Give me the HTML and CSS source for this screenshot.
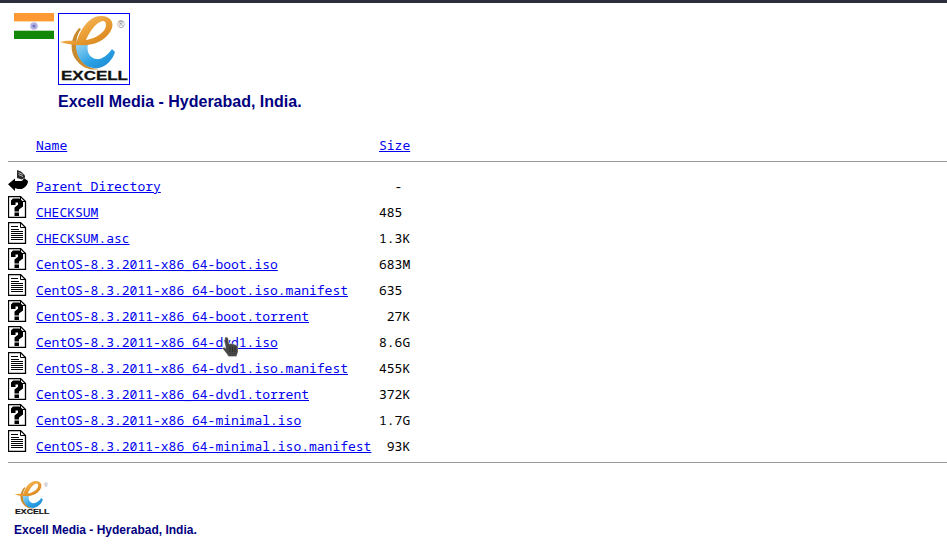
FILE: index.html
```html
<!DOCTYPE html>
<html lang="en">
<head>
<meta charset="utf-8">
<title>Index of CentOS 8.3.2011</title>
<link rel="stylesheet" href="styles.css">
</head>
<body>
<svg class="defs" width="0" height="0" aria-hidden="true">
  <defs>
    <linearGradient id="orange" x1="0" y1="0" x2="1" y2="1">
      <stop offset="0" stop-color="#f8cf8c"/><stop offset="0.5" stop-color="#eda23a"/><stop offset="1" stop-color="#d07d12"/>
    </linearGradient>
    <linearGradient id="blue" x1="0" y1="0" x2="1" y2="1">
      <stop offset="0" stop-color="#9ad6f4"/><stop offset="0.55" stop-color="#2aa0e4"/><stop offset="1" stop-color="#1a86cf"/>
    </linearGradient>
    <symbol id="logo" viewBox="0 0 70 70">
      <path d="M20 14 C11 24 10 38 18 47 C24 54 32 57 40 55 C30 55 22 49 19 40 C16 31 17 22 22 15Z" fill="#c98a30"/>
      <path d="M17 31 C17 47 29 56 40 54 C48 52 54 45 56 38 L53 35 C48 42 42 46 37 45 C31 44 27 38 29 30 Z" fill="url(#blue)"/>
      <path d="M1 28 C8 26 14 27 18 27 C21 16 30 2 42 2 C51 2 55 8 53 14 C50 23 40 30 28 31 C18 32 8 30 1 28Z M27 26 C36 25 47 18 47 11 C47 7 44 6 41 8 C35 11 30 19 27 26Z" fill="url(#orange)" fill-rule="evenodd"/>
      <text class="logo-mark" x="62" y="14" text-anchor="middle">®</text>
      <text class="logo-text" x="35.500" y="66" text-anchor="middle" textLength="67" lengthAdjust="spacingAndGlyphs">EXCELL</text>
    </symbol>
    <symbol id="icon-unknown" viewBox="0 0 20 22">
      <path d="M0.500 0.500H12.500L17.500 5.500V21.500H0.500Z" fill="#fff" stroke="#000" stroke-width="1.300"/>
      <path d="M12.500 0.500V5.500H17.500" fill="none" stroke="#000"/>
      <path d="M3 9V4.500L5 2.500H11.500L15 5.500V10.500L11 13.500V15.500H6.500V11.500L10 8.800V6.500H7.500V9Z" fill="#000"/>
      <rect x="6.500" y="16.500" width="4.500" height="3.500" fill="#000"/>
    </symbol>
    <symbol id="icon-text" viewBox="0 0 20 22">
      <path d="M0.500 0.500H12.500L17.500 5.500V21.500H0.500Z" fill="#fff" stroke="#000" stroke-width="1.300"/>
      <path d="M12.500 0.500V5.500H17.500" fill="none" stroke="#000"/>
      <path d="M3 4.500H10M3 7.500H11M3 9.500H15M3 11.500H15M3 13.500H15M3 15.500H15M3 17.500H15" stroke="#000" fill="none"/>
    </symbol>
    <symbol id="icon-back" viewBox="0 0 20 22">
      <path d="M0 14.300L7 8.500V11H13C14.500 11 15.500 9.500 16 8L20 11C20 14 18 17 15 18.500C12.500 19.500 9 19 7 18V21Z" fill="#000"/>
      <path d="M9 0L13 1.500L17 5.500L17 7.500L14 9.500L9 8Z" fill="#2a2a2a"/>
      <path d="M10.500 2.500L14.500 4.500M10.500 4.500L15 6.500" stroke="#bbb" fill="none"/>
    </symbol>
  </defs>
</svg>

<header class="brand">
  <div class="brand-row">
    <svg class="flag" viewBox="0 0 40 26" aria-label="Flag of India">
      <rect width="40" height="9" fill="#ff9933"/>
      <rect y="8" width="40" height="1" fill="#ffd9a8"/>
      <rect y="9" width="40" height="8" fill="#fff"/>
      <rect y="17" width="40" height="9" fill="#138808"/>
      <rect y="17" width="40" height="1" fill="#b7d9b3"/>
      <circle cx="20" cy="13" r="3.800" fill="#b4b4e2"/>
      <circle cx="20" cy="13" r="1.600" fill="#7474c0"/>
    </svg>
    <div class="brand-main">
      <a class="logo-frame" href="#"><svg class="logo-large"><use href="#logo"/></svg></a>
      <h2 class="title">Excell Media - Hyderabad, India.</h2>
    </div>
  </div>
</header>

<table class="listing">
  <tr class="head"><td class="ic"></td><td class="name"><a href="#">Name</a></td><td class="size"><a href="#">Size</a></td></tr>
  <tr><td colspan="3" class="rule rule-top"><hr></td></tr>
  <tr><td class="ic"><svg class="icon"><use href="#icon-back"/></svg></td><td class="name"><a href="#">Parent Directory</a></td><td class="size">  -</td></tr>
  <tr><td class="ic"><svg class="icon"><use href="#icon-unknown"/></svg></td><td class="name"><a href="#">CHECKSUM</a></td><td class="size">485</td></tr>
  <tr><td class="ic"><svg class="icon"><use href="#icon-text"/></svg></td><td class="name"><a href="#">CHECKSUM.asc</a></td><td class="size">1.3K</td></tr>
  <tr><td class="ic"><svg class="icon"><use href="#icon-unknown"/></svg></td><td class="name"><a href="#">CentOS-8.3.2011-x86_64-boot.iso</a></td><td class="size">683M</td></tr>
  <tr><td class="ic"><svg class="icon"><use href="#icon-text"/></svg></td><td class="name"><a href="#">CentOS-8.3.2011-x86_64-boot.iso.manifest</a></td><td class="size">635</td></tr>
  <tr><td class="ic"><svg class="icon"><use href="#icon-unknown"/></svg></td><td class="name"><a href="#">CentOS-8.3.2011-x86_64-boot.torrent</a></td><td class="size"> 27K</td></tr>
  <tr><td class="ic"><svg class="icon"><use href="#icon-unknown"/></svg></td><td class="name"><a href="#">CentOS-8.3.2011-x86_64-dvd1.iso</a></td><td class="size">8.6G</td></tr>
  <tr><td class="ic"><svg class="icon"><use href="#icon-text"/></svg></td><td class="name"><a href="#">CentOS-8.3.2011-x86_64-dvd1.iso.manifest</a></td><td class="size">455K</td></tr>
  <tr><td class="ic"><svg class="icon"><use href="#icon-unknown"/></svg></td><td class="name"><a href="#">CentOS-8.3.2011-x86_64-dvd1.torrent</a></td><td class="size">372K</td></tr>
  <tr><td class="ic"><svg class="icon"><use href="#icon-unknown"/></svg></td><td class="name"><a href="#">CentOS-8.3.2011-x86_64-minimal.iso</a></td><td class="size">1.7G</td></tr>
  <tr><td class="ic"><svg class="icon"><use href="#icon-text"/></svg></td><td class="name"><a href="#">CentOS-8.3.2011-x86_64-minimal.iso.manifest</a></td><td class="size"> 93K</td></tr>
  <tr><td colspan="3" class="rule rule-bottom"><hr></td></tr>
</table>

<footer class="foot">
  <svg class="logo-small"><use href="#logo"/></svg>
  <p class="foot-title">Excell Media - Hyderabad, India.</p>
</footer>

<svg class="cursor" viewBox="0 0 18 22" aria-hidden="true">
  <path d="M4 1.500C5.500 0.500 7 1.500 7.300 3L8 8L10 7.500L12 8L14 8.500L16 9.500L17 11V16L15.500 20.500H7.500L5.500 17.500L1.500 12.500L3 11L4.800 12.500L3.500 5Z" fill="#474747" stroke="#fff" stroke-width="0.500" stroke-opacity="0.700"/>
  <path d="M9 11V16M11.500 11V16M14 11V16" stroke="#222" stroke-width="0.700" fill="none"/>
</svg>
</body>
</html>
```
FILE: styles.css
```css
html, body {
  margin: 0;
  padding: 0;
  background: #fff;
  overflow: hidden;
}
body {
  position: relative;
  height: 555px;
  border-top: 3px solid #2c2e3a;
  box-sizing: border-box;
  padding: 0 0 0 8px;
  color: #000;
  font-family: "Noto Sans Mono", "DejaVu Sans Mono", monospace;
  font-size: 13px;
}
.defs { position: absolute; }
.logo-text {
  font-family: "Liberation Sans", Arial, sans-serif;
  font-weight: 700;
  font-size: 13px;
  fill: #111;
  stroke: #111;
  stroke-width: 0.300;
}
.logo-mark {
  font-family: "Liberation Sans", Arial, sans-serif;
  font-size: 10px;
  fill: #888;
}
.brand { padding: 10px 0 0 6px; }
.brand-row { display: flex; gap: 4px; align-items: flex-start; }
.flag { width: 40px; height: 26px; display: block; }
.brand-main { display: flex; flex-direction: column; }
.logo-frame {
  display: block;
  width: 70px;
  height: 70px;
  border: 1px solid #0000ee;
}
.logo-large { display: block; width: 70px; height: 70px; }
.title {
  margin: 8px 0 0;
  font-family: "Liberation Sans", Arial, sans-serif;
  font-size: 16px;
  line-height: 18px;
  font-weight: 700;
  color: #000080;
}
.listing {
  margin-top: 19px;
  width: 939px;
  border-collapse: collapse;
  table-layout: fixed;
}
.listing td {
  box-sizing: border-box;
  padding: 0 0 2px;
  height: 26px;
  vertical-align: bottom;
  line-height: 15px;
  white-space: pre;
}
.listing .head td { padding-bottom: 3px; }
.listing td.ic { width: 28px; padding: 0; vertical-align: top; }
.listing td.name { width: 343px; }
.listing td.rule { height: auto; }
.rule hr { margin: 0; border: 0; border-top: 1px solid #999; height: 0; }
.listing td.rule-top { padding: 5px 0 8px; }
.listing td.rule-bottom { padding: 6px 0 0; }
.icon { display: block; width: 20px; height: 22px; }
a { color: #0000ee; }
.foot { padding: 17px 0 0 6px; }
.logo-small { display: block; width: 36px; height: 36px; }
.foot-title {
  margin: 7px 0 0;
  font-family: "Liberation Sans", Arial, sans-serif;
  font-size: 12px;
  line-height: 14px;
  font-weight: 700;
  color: #000080;
}
.cursor { position: absolute; left: 221px; top: 333px; width: 18px; height: 22px; }
```
